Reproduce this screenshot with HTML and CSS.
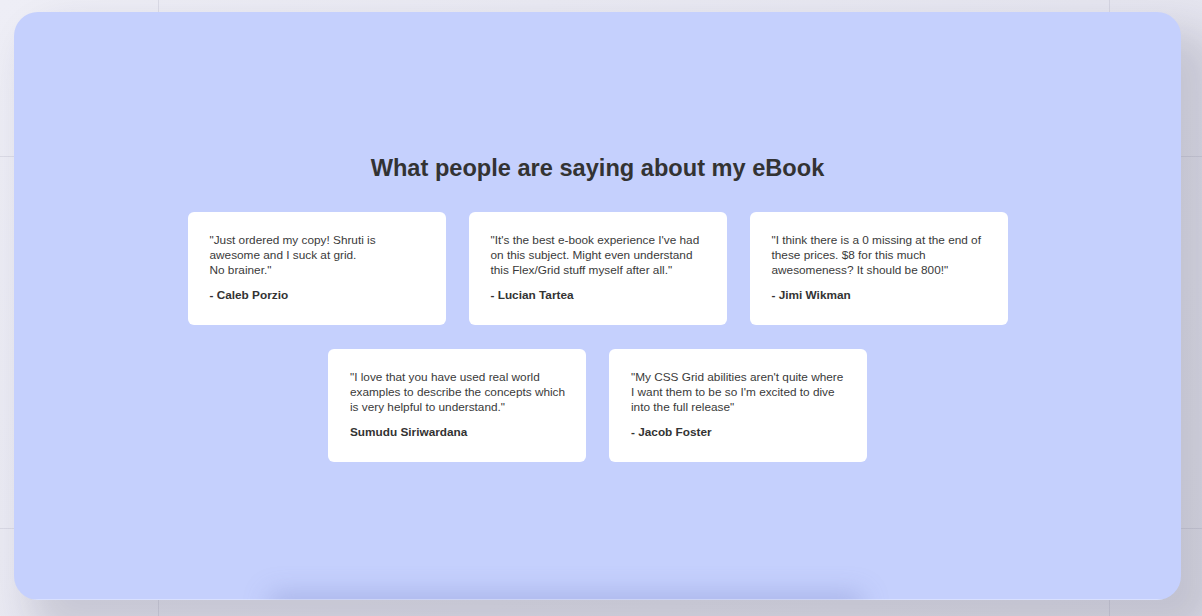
FILE: index.html
```html
<!DOCTYPE html>
<html lang="en">
<head>
<meta charset="utf-8">
<title>Testimonials</title>
<link rel="stylesheet" href="styles.css">
</head>
<body>
<main class="slide">
  <section class="testimonials">
    <h1 class="title">What people are saying about my eBook</h1>
    <div class="cards">
      <article class="card">
        <p class="quote">"Just ordered my copy! Shruti is<br>awesome and I suck at grid.<br>No brainer."</p>
        <p class="author">- Caleb Porzio</p>
      </article>
      <article class="card">
        <p class="quote">"It's the best e-book experience I've had<br>on this subject. Might even understand<br>this Flex/Grid stuff myself after all."</p>
        <p class="author">- Lucian Tartea</p>
      </article>
      <article class="card">
        <p class="quote">"I think there is a 0 missing at the end of<br>these prices. $8 for this much<br>awesomeness? It should be 800!"</p>
        <p class="author">- Jimi Wikman</p>
      </article>
      <article class="card">
        <p class="quote">"I love that you have used real world<br>examples to describe the concepts which<br>is very helpful to understand."</p>
        <p class="author">Sumudu Siriwardana</p>
      </article>
      <article class="card">
        <p class="quote">"My CSS Grid abilities aren't quite where<br>I want them to be so I'm excited to dive<br>into the full release"</p>
        <p class="author">- Jacob Foster</p>
      </article>
    </div>
  </section>
  <div class="under-shadow"></div>
</main>
</body>
</html>
```

FILE: styles.css
```css
html, body {
  margin: 0;
  padding: 0;
}

body {
  width: 1202px;
  height: 616px;
  overflow: hidden;
  font-family: "Liberation Sans", Arial, Helvetica, sans-serif;
  color: #333333;
  background-color: #e8e8f2;
  background-image:
    linear-gradient(to right, transparent 158px, rgba(90, 90, 120, 0.12) 158px, rgba(90, 90, 120, 0.12) 159px, transparent 159px),
    linear-gradient(to right, transparent 1109px, rgba(90, 90, 120, 0.12) 1109px, rgba(90, 90, 120, 0.12) 1110px, transparent 1110px),
    linear-gradient(to bottom, transparent 156px, rgba(90, 90, 120, 0.12) 156px, rgba(90, 90, 120, 0.12) 157px, transparent 157px),
    linear-gradient(to bottom, transparent 528px, rgba(90, 90, 120, 0.12) 528px, rgba(90, 90, 120, 0.12) 529px, transparent 529px),
    linear-gradient(135deg, #eeeef6 0%, #e6e6f0 60%, #e2e2ec 100%);
  padding-top: 12px;
  padding-left: 14px;
  box-sizing: border-box;
}

.slide {
  position: relative;
  width: 1167px;
  height: 588px;
  background: #c5d0fd;
  border-radius: 24px;
  overflow: hidden;
  box-shadow: 26px 28px 40px 10px rgba(40, 40, 70, 0.17);
  display: flex;
  align-items: center;
  justify-content: center;
}

.slide::after {
  content: "";
  position: absolute;
  left: 0;
  right: 0;
  bottom: 0;
  height: 1px;
  background: rgba(255, 255, 255, 0.35);
}

.testimonials {
  display: flex;
  flex-direction: column;
  align-items: center;
  padding-top: 3px;
}

.title {
  margin: 0 0 30px;
  font-size: 23.6px;
  line-height: 28px;
  font-weight: 700;
  color: #333333;
  letter-spacing: 0;
}

.cards {
  width: 821px;
  display: flex;
  flex-wrap: wrap;
  justify-content: center;
  gap: 24px 23px;
}

.card {
  width: 258px;
  height: 113px;
  box-sizing: border-box;
  background: #ffffff;
  border-radius: 6px;
  padding: 21px 21px 0 22px;
}

.quote {
  margin: 0;
  font-size: 11.8px;
  line-height: 15px;
  color: #3a3a3a;
  white-space: nowrap;
}

.author {
  margin: 10.5px 0 0;
  font-size: 11.8px;
  line-height: 15px;
  font-weight: 700;
  color: #333333;
}

.under-shadow {
  position: absolute;
  left: 262px;
  width: 580px;
  bottom: -12px;
  height: 12px;
  box-shadow: 0 0 26px 6px rgba(110, 120, 190, 0.35);
}
```
